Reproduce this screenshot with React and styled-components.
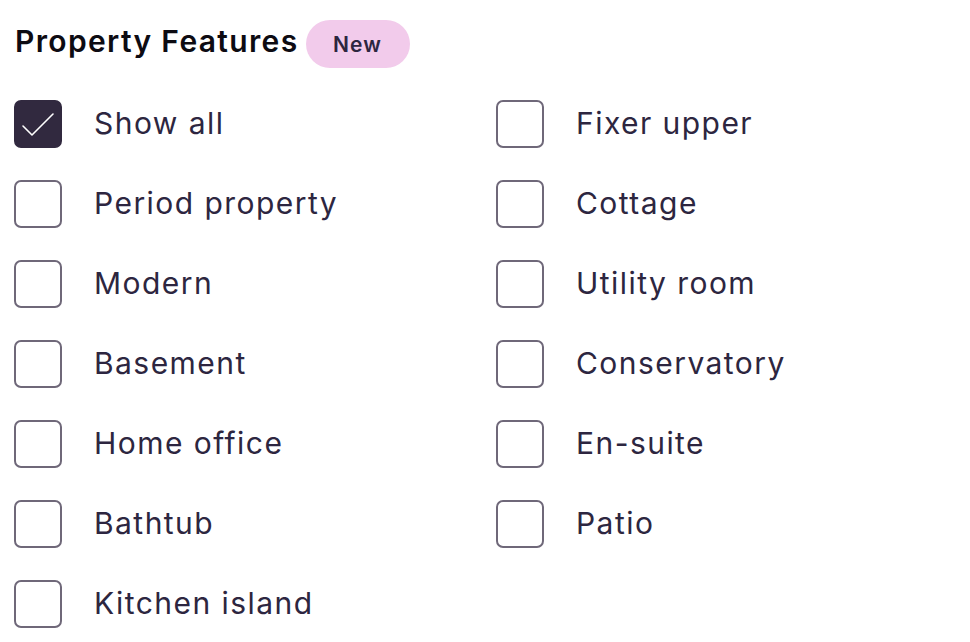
import React from "react";
import styled, { createGlobalStyle } from "styled-components";

const GlobalStyle = createGlobalStyle`
  body {
    margin: 0;
    background: #ffffff;
    font-family: "Inter", "Liberation Sans", sans-serif;
  }
`;

const left = ["Show all", "Period property", "Modern", "Basement", "Home office", "Bathtub", "Kitchen island"];
const right = ["Fixer upper", "Cottage", "Utility room", "Conservatory", "En-suite", "Patio"];

function App() {
  return (
    <>
      <GlobalStyle />
      <Panel>
        <Header>
          <Title>Property Features</Title>
          <Badge>New</Badge>
        </Header>
        <Columns>
          <Column>
            {left.map((label, i) => (
              <Option key={label} label={label} checked={i === 0} />
            ))}
          </Column>
          <Column>
            {right.map((label) => (
              <Option key={label} label={label} />
            ))}
          </Column>
        </Columns>
      </Panel>
    </>
  );
}

function Option({ label, checked }) {
  return (
    <Row>
      <Box $checked={checked}>
        {checked && (
          <svg width="48" height="48" viewBox="0 0 48 48">
            <path d="M9 26 L18 35 L39 14" fill="none" stroke="#fff" strokeWidth="1.6" strokeLinecap="round" strokeLinejoin="round" />
          </svg>
        )}
      </Box>
      <Label>{label}</Label>
    </Row>
  );
}

const Panel = styled.div`
  padding: 20px 0 0 14px;
`;

const Header = styled.div`
  display: flex;
  align-items: center;
  gap: 7px;
  height: 48px;
  padding-left: 1px;
`;

const Title = styled.h2`
  margin: 0 0 7px;
  font-size: 30px;
  font-weight: 600;
  color: #0d0b12;
  letter-spacing: 1.35px;
`;

const Badge = styled.span`
  display: inline-flex;
  align-items: center;
  justify-content: center;
  width: 104px;
  height: 48px;
  border-radius: 24px;
  background: #f2cbeb;
  color: #2d2640;
  font-size: 21px;
  font-weight: 600;
  letter-spacing: 1.2px;
`;

const Columns = styled.div`
  display: grid;
  grid-template-columns: 482px 1fr;
  margin-top: 32px;
`;

const Column = styled.div`
  display: flex;
  flex-direction: column;
  gap: 32px;
`;

const Row = styled.label`
  display: flex;
  align-items: center;
  gap: 32px;
  height: 48px;
`;

const Box = styled.span`
  box-sizing: border-box;
  width: 48px;
  height: 48px;
  flex: none;
  border-radius: 7px;
  border: 2px solid ${(p) => (p.$checked ? "#31293f" : "#6f6879")};
  background: ${(p) => (p.$checked ? "#31293f" : "#ffffff")};
  display: flex;
  svg {
    margin: -2px;
  }
`;

const Label = styled.span`
  font-size: 30px;
  color: #2d2640;
  letter-spacing: 1.45px;
  margin-bottom: 2px;
`;

export default App;
